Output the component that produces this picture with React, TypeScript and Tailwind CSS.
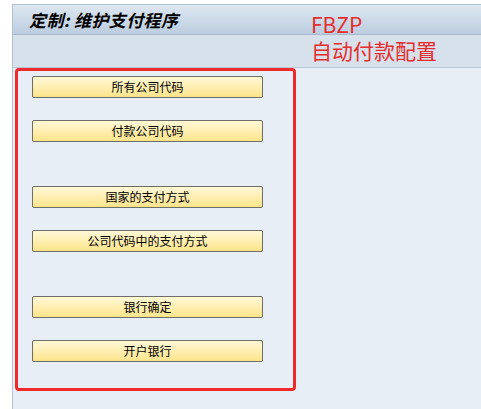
const buttons: { label: string; gap: string }[] = [
  { label: '所有公司代码', gap: 'mt-0' },
  { label: '付款公司代码', gap: 'mt-[22px]' },
  { label: '国家的支付方式', gap: 'mt-[44px]' },
  { label: '公司代码中的支付方式', gap: 'mt-[22px]' },
  { label: '银行确定', gap: 'mt-[44px]' },
  { label: '开户银行', gap: 'mt-[22px]' },
];

const cjk = { fontFamily: '"Noto Sans CJK SC", "Noto Sans", sans-serif' };

export default function App() {
  return (
    <div className="relative w-[481px] h-[409px] overflow-hidden bg-white pt-[4px] pl-[12px]" style={cjk}>
      <div className="flex h-full flex-col border-l border-t border-[#b4c2d0] bg-[#e8eef5]">
        {/* Title bar */}
        <div className="flex h-[30px] items-center border-b border-[#a6b8ca] bg-gradient-to-b from-[#dde7f1] to-[#bccddf] pl-[16px]">
          <span className="text-[17px] font-bold italic leading-none tracking-[0.4px] text-black">定制: 维护支付程序</span>
        </div>
        {/* Toolbar */}
        <div className="h-[33px] border-b border-[#b9c7d5] bg-[#d6e1ec]" />

        {/* Body */}
        <div className="pl-[2px]">
          <div className="flex h-[323px] w-[281px] flex-col rounded-[4px] border-[3px] border-[#ee2a2a] pl-[14px] pt-[5px]">
            {buttons.map((b) => (
              <button
                key={b.label}
                className={`${b.gap} flex h-[22px] w-[231px] items-center justify-center rounded-[2px] border border-[#6e6e66] bg-gradient-to-b from-[#fff8d6] to-[#fde48a] text-[12px] leading-none text-black`}
              >
                {b.label}
              </button>
            ))}
          </div>
        </div>
      </div>

      {/* Annotation */}
      <div className="absolute left-[311px] top-[10px] flex flex-col text-[#e52d2d]">
        <span className="text-[21px] leading-[28px]">FBZP</span>
        <span className="text-[21px] leading-[25px]">自动付款配置</span>
      </div>
    </div>
  );
}
